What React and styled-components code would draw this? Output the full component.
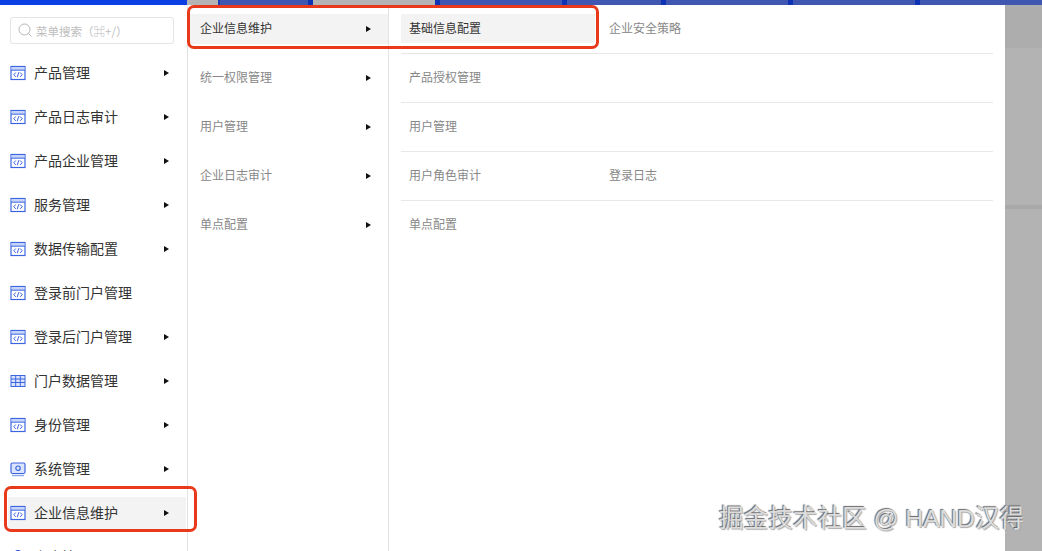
import React from 'react';
import styled, { createGlobalStyle } from 'styled-components';

const sidebarItems = [
  { label: '产品管理', arrow: true },
  { label: '产品日志审计', arrow: true },
  { label: '产品企业管理', arrow: true },
  { label: '服务管理', arrow: true },
  { label: '数据传输配置', arrow: true },
  { label: '登录前门户管理' },
  { label: '登录后门户管理', arrow: true },
  { label: '门户数据管理', arrow: true, icon: 'table' },
  { label: '身份管理', arrow: true },
  { label: '系统管理', arrow: true, icon: 'system' },
  { label: '企业信息维护', arrow: true, active: true },
  { label: '安全管理', arrow: true, icon: 'user' },
];

const groups = [
  { label: '企业信息维护', active: true, links: ['基础信息配置', '企业安全策略'] },
  { label: '统一权限管理', links: ['产品授权管理'] },
  { label: '用户管理', links: ['用户管理'] },
  { label: '企业日志审计', links: ['用户角色审计', '登录日志'] },
  { label: '单点配置', links: ['单点配置'] },
];

const topSegments = [
  ['#0b3fe3', 187], ['#b4b4b4', 31], ['#1d3cb8', 2], ['#3f57b1', 88], ['#0d32b4', 5],
  ['#b4b4b4', 122], ['#0d32b4', 5], ['#3f57b1', 122], ['#0d32b4', 5], ['#3f57b1', 94],
  ['#0d32b4', 5], ['#3f57b1', 122], ['#0d32b4', 5], ['#3f57b1', 122], ['#0d32b4', 5], ['#3f57b1', 122],
];

const MenuIcon = ({ type }) => {
  if (type === 'table') {
    return (
      <svg width="16" height="16" viewBox="0 0 16 16" fill="none">
        <rect x="1" y="2.5" width="14" height="11" fill="#dbe4fb" stroke="#3b66e0" />
        <path d="M1 6h14M1 9.5h14M5.7 2.5v11M10.3 2.5v11" stroke="#3b66e0" />
      </svg>
    );
  }
  if (type === 'system') {
    return (
      <svg width="16" height="16" viewBox="0 0 16 16" fill="none">
        <rect x="1" y="2" width="14" height="10.5" rx="1.5" fill="#dbe4fb" stroke="#3b66e0" strokeWidth="1.2" />
        <circle cx="8" cy="7.2" r="2.2" stroke="#3b66e0" strokeWidth="1.2" />
        <path d="M2 14.5h12" stroke="#8fa8ea" strokeWidth="1.5" />
      </svg>
    );
  }
  if (type === 'user') {
    return (
      <svg width="16" height="16" viewBox="0 0 16 16" fill="none">
        <circle cx="8" cy="4.5" r="3.5" fill="#2450d8" />
        <path d="M2 15c0-3.500 2.700-5 6-5s6 1.500 6 5" fill="#8fa8ea" />
      </svg>
    );
  }
  return (
    <svg width="16" height="16" viewBox="0 0 16 16" fill="none">
      <rect x="1" y="1.500" width="14" height="13" fill="#fff" stroke="#3b66e0" strokeWidth="1.2" />
      <rect x="1.500" y="2" width="13" height="3" fill="#c6d4f7" />
      <path d="M1 5.200h14" stroke="#3b66e0" />
      <path d="M5.800 7.500 3.800 9.700l2 2.200M10.200 7.500l2 2.200-2 2.200M8.800 7.200l-1.600 5" stroke="#3b66e0" />
    </svg>
  );
};

const SearchGlyph = () => (
  <svg width="15" height="15" viewBox="0 0 15 15" fill="none">
    <circle cx="6.500" cy="6.500" r="5.500" stroke="#b5b5b5" />
    <path d="m10.500 10.500 3 3" stroke="#b5b5b5" />
  </svg>
);

export default function App() {
  return (
    <Page>
      <GlobalStyle />
      <TopBar>
        {topSegments.map(([color, width], i) => <TopSegment key={i} $color={color} $width={width} />)}
      </TopBar>
      <Body>
        <MenuPanel>
          <Sidebar>
            <SearchBox>
              <SearchGlyph />
              <span>菜单搜索（⌘+/）</span>
            </SearchBox>
            {sidebarItems.map(item => (
              <SideItem key={item.label} $active={item.active}>
                <MenuIcon type={item.icon} />
                <SideLabel>{item.label}</SideLabel>
                {item.arrow && <Arrow />}
              </SideItem>
            ))}
          </Sidebar>
          <GroupColumn>
            {groups.map(group => (
              <GroupRow key={group.label}>
                <GroupItem $active={group.active}>
                  <GroupLabel>{group.label}</GroupLabel>
                  <Arrow />
                </GroupItem>
              </GroupRow>
            ))}
          </GroupColumn>
          <LinkColumn>
            {groups.map(group => (
              <LinkRow key={group.label}>
                {group.links.map((link, i) => (
                  <LinkCell key={link} $active={group.active && i === 0}>{link}</LinkCell>
                ))}
              </LinkRow>
            ))}
          </LinkColumn>
        </MenuPanel>
        <Scrim>
          <ScrimHeader />
          <ScrimLine />
        </Scrim>
      </Body>
      <Highlight $x={187} $y={5} $w={412} $h={44} />
      <Highlight $x={4} $y={486} $w={193} $h={46} />
      <Watermark>掘金技术社区 @ HAND汉得</Watermark>
    </Page>
  );
}

const GlobalStyle = createGlobalStyle`
  html, body {
    margin:0;
    padding:0;
    background:#fff;
  }
  * {
    box-sizing:border-box;
  }
`;
const Page = styled.div`
  position:relative;
  display:flex;
  flex-flow:column nowrap;
  width:1042px;
  height:551px;
  overflow:hidden;
  font-family:"Noto Sans CJK SC", "Liberation Sans", sans-serif;
`;
const TopBar = styled.div`
  display:flex;
  flex:0 0 5px;
`;
const TopSegment = styled.div`
  flex:0 0 ${props => props.$width}px;
  background-color:${props => props.$color};
`;
const Body = styled.div`
  display:flex;
  flex:1;
  min-height:0;
`;
const MenuPanel = styled.div`
  display:flex;
  flex:0 0 1005px;
  background-color:#fff;
`;
const Sidebar = styled.nav`
  flex:0 0 188px;
  padding-top:12px;
  border-right:1px solid #e3e3e3;
`;
const SearchBox = styled.div`
  display:flex;
  align-items:center;
  gap:3px;
  width:164px;
  height:27px;
  margin:0 0 7px 10px;
  padding-left:7px;
  border:1px solid #e4e4e4;
  border-radius:3px;
  color:#bdbdbd;
  font-size:11.5px;
  white-space:nowrap;
`;
const SideItem = styled.div`
  display:flex;
  align-items:center;
  height:44px;
  margin-left:8px;
  width:178px;
  padding:0 17px 0 2px;
  background:${props => props.$active
    ? 'linear-gradient(#fff 6px, #f3f3f3 6px, #f3f3f3 38px, #fff 38px)'
    : 'transparent'};
`;
const SideLabel = styled.span`
  flex:1;
  margin-left:8px;
  padding-bottom:2px;
  color:#333;
  font-size:14px;
`;
const Arrow = styled.i`
  display:block;
  width:0;
  height:0;
  border-top:3.5px solid transparent;
  border-bottom:3.5px solid transparent;
  border-left:5px solid #111;
`;
const GroupColumn = styled.div`
  flex:0 0 201px;
  border-right:1px solid #e3e3e3;
`;
const GroupRow = styled.div`
  display:flex;
  align-items:center;
  height:49px;
  padding-bottom:2px;
`;
const GroupItem = styled.div`
  display:flex;
  align-items:center;
  justify-content:space-between;
  width:100%;
  height:30px;
  padding:0 17px 0 12px;
  background-color:${props => props.$active ? '#f3f3f3' : 'transparent'};
  color:${props => props.$active ? '#333' : '#888'};
  font-size:12px;
`;
const GroupLabel = styled.span`
  padding-bottom:2px;
`;
const LinkColumn = styled.div`
  flex:1;
  padding:0 12px;
`;
const LinkRow = styled.div`
  display:flex;
  align-items:center;
  gap:6px;
  height:49px;
  padding-bottom:2px;
  border-bottom:1px solid #e8e8e8;

  &:last-of-type {
    border-bottom:0;
  }
`;
const LinkCell = styled.div`
  display:flex;
  align-items:center;
  flex:0 0 194px;
  height:29px;
  padding:0 0 2px 8px;
  background-color:${props => props.$active ? '#f3f3f3' : 'transparent'};
  color:${props => props.$active ? '#333' : '#888'};
  font-size:12px;
`;
const Scrim = styled.div`
  flex:1;
  background-color:#b3b3b3;
`;
const ScrimHeader = styled.div`
  height:43px;
  background-color:#adadae;
`;
const ScrimLine = styled.div`
  height:4px;
  margin-top:157px;
  background-color:#a9a9a9;
`;
const Highlight = styled.div`
  position:absolute;
  left:${props => props.$x}px;
  top:${props => props.$y}px;
  width:${props => props.$w}px;
  height:${props => props.$h}px;
  border:3px solid #e8391a;
  border-radius:7px;
`;
const Watermark = styled.div`
  position:absolute;
  left:719px;
  top:501px;
  color:#dcdcdc;
  font-family:"Liberation Sans", "Noto Sans CJK SC", sans-serif;
  font-size:24.6px;
  line-height:36px;
  white-space:nowrap;
  text-shadow:-1px -1px 1px #666, 1px 1px 1px #aaa;
`;
